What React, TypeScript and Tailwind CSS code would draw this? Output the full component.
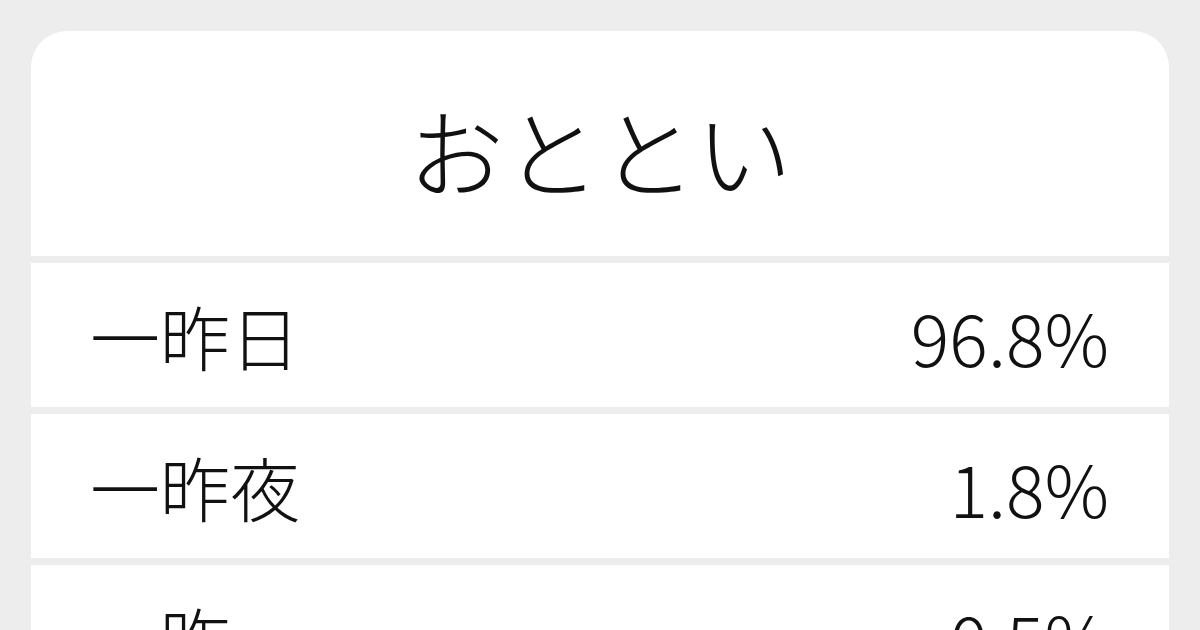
import React from "react";

const rows = [
  { w: "一昨日", p: "96.8%" },
  { w: "一昨夜", p: "1.8%" },
  { w: "一昨", p: "0.5%" },
];

export default function App() {
  return (
    <div
      className="w-[1200px] h-[630px] overflow-hidden bg-[#ededed] pt-[31px] px-[31px]"
      style={{ fontFamily: '"Noto Sans CJK JP", "Noto Sans", sans-serif' }}
    >
      <div className="flex flex-col gap-[7px] rounded-t-[36px] overflow-hidden">
        <div className="h-[225px] bg-white flex items-center justify-center pt-[10px]">
          <span className="text-[96px] font-light leading-none text-[#111]">おととい</span>
        </div>
        {rows.map((r) => (
          <div
            key={r.w}
            className="h-[144px] bg-white flex items-center justify-between pl-[59px] pr-[60px] pt-[2px] shrink-0"
          >
            <span className="text-[70px] font-light leading-none text-[#111]">{r.w}</span>
            <span className="text-[72px] font-light leading-none text-[#111]">{r.p}</span>
          </div>
        ))}
      </div>
    </div>
  );
}
